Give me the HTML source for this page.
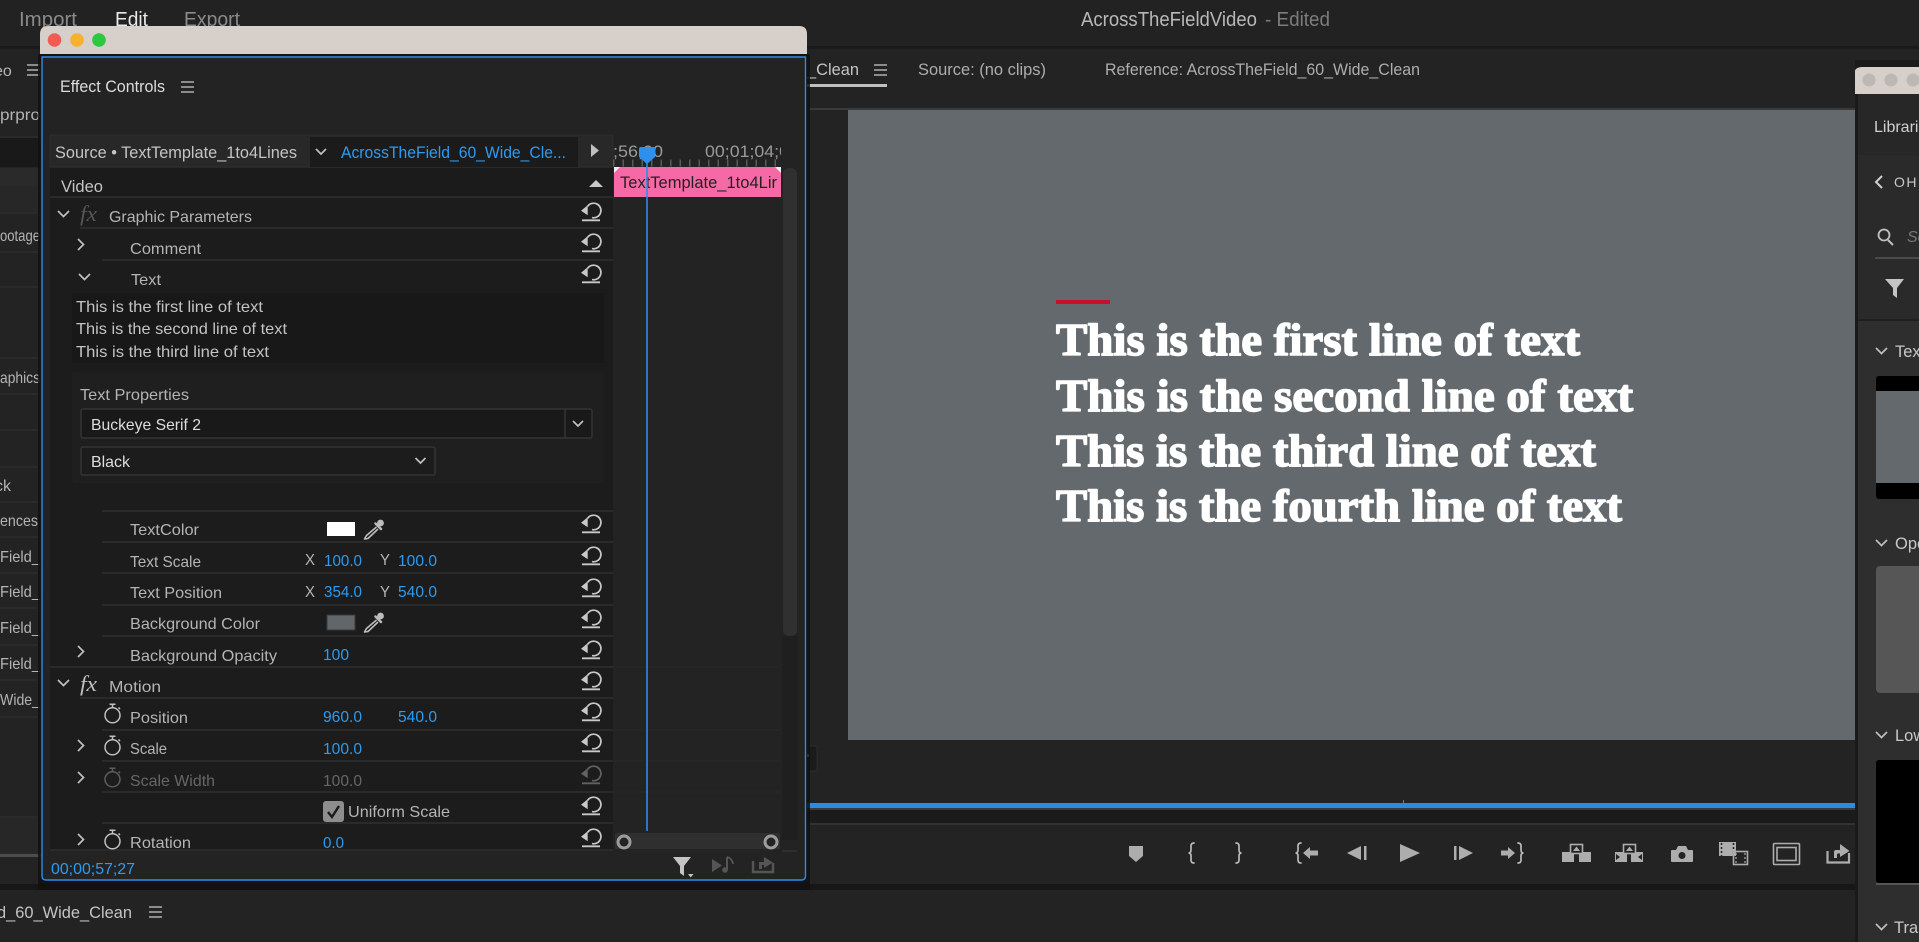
<!DOCTYPE html>
<html lang="en">
<head>
<meta charset="utf-8">
<title>AcrossTheFieldVideo - Edited</title>
<style>
html,body{margin:0;padding:0;background:#232323;width:1919px;height:942px;overflow:hidden}
svg{display:block;position:absolute;left:0;top:0}
text{font-family:"Liberation Sans",sans-serif;font-size:16px;fill:#b4b4b4}
.b{fill:#2d9bf0}
.m{font-size:20px;fill:#8a8a8a}
.t{font-size:16.5px;fill:#c4c4c4}
.d{fill:#666}
.h{font-family:"Liberation Serif",serif;font-weight:bold;font-size:45px;fill:#fff;stroke:#fff;stroke-width:1.5px;stroke-linejoin:round}
.l{stroke:#2a2a2a;stroke-width:2;fill:none}
.i{fill:#adadad}
.s{stroke:#b8b8b8;stroke-width:1.700;fill:none;stroke-linecap:round}
.p{font-size:16.5px;fill:#c8c8c8}
</style>
</head>
<body>
<svg width="1919" height="942" viewBox="0 0 1919 942" xmlns="http://www.w3.org/2000/svg">
<defs>
<g id="r" fill="none" stroke="#c8c8c8" stroke-width="1.700">
<path d="M6.500 4.500A7.300 7.300 0 1 1 11 15.600"/>
<path d="M0 8.700L6.700 3.300V13.300Z" fill="#c8c8c8" stroke="none"/>
<path d="M1 18.300H19" stroke-width="1.900"/>
</g>
<g id="w" fill="none" stroke="#c0c0c0" stroke-width="1.500">
<circle cx="8.500" cy="12.300" r="7.500"/>
<path d="M5.500 1.200H11.500M8.500 1.200V4.800M14.500 4.500L16 6"/>
</g>
<g id="e">
<circle cx="17.500" cy="4" r="3.400" fill="#bcbcbc"/>
<path d="M12.500 4.500L18 10" stroke="#bcbcbc" stroke-width="2.400" stroke-linecap="round"/>
<path d="M13.500 8L3.500 16.500L1.500 20L5 19.500L15 10" fill="none" stroke="#bcbcbc" stroke-width="1.600" stroke-linejoin="round"/>
</g>
<path id="rc" d="M0 0L5.500 5.500L0 11" fill="none" stroke="#c0c0c0" stroke-width="1.700"/>
<path id="dc" d="M0 0L5.500 5.500L11 0" fill="none" stroke="#c0c0c0" stroke-width="1.700"/>
<g id="ham" stroke="#b0b0b0" stroke-width="1.600"><path d="M0 1H13M0 6H13M0 11H13"/></g>
<clipPath id="tl"><rect x="613" y="135" width="168" height="32"/></clipPath>
<clipPath id="rp"><rect x="1855" y="0" width="64" height="942"/></clipPath>
</defs>

<!-- app background -->
<rect width="1919" height="942" fill="#232323"/>
<rect width="1919" height="46" fill="#222"/>
<rect y="46" width="1919" height="3" fill="#1a1a1a"/>
<text class="m" x="19" y="26" textLength="58" lengthAdjust="spacingAndGlyphs">Import</text>
<text class="m" x="115" y="26" textLength="33" lengthAdjust="spacingAndGlyphs" style="fill:#e8e8e8">Edit</text>
<text class="m" x="184" y="26" textLength="56" lengthAdjust="spacingAndGlyphs">Export</text>
<text class="m" x="1081" y="26" textLength="176" lengthAdjust="spacingAndGlyphs" style="fill:#b8b8b8">AcrossTheFieldVideo</text>
<text class="m" x="1265" y="26" textLength="65" lengthAdjust="spacingAndGlyphs" style="fill:#7c7c7c">- Edited</text>

<!-- left project panel -->
<rect x="0" y="49" width="42" height="836" fill="#232323"/>
<text x="-6" y="76">eo</text>
<use href="#ham" x="27" y="64"/>
<text x="0" y="120" textLength="40" lengthAdjust="spacingAndGlyphs">prpro</text>
<rect x="0" y="138" width="42" height="29" fill="#191919"/>
<rect x="0" y="168" width="42" height="17" fill="#2a2a2a"/>
<rect x="0" y="186" width="42" height="27" fill="#272727"/>
<path class="l" d="M0 137H42M0 185H42M0 213H42M0 252H42M0 287H42M0 358H42M0 394H42M0 430H42M0 467H42M0 502H42M0 537H42M0 573H42M0 608H42M0 645H42M0 680H42M0 717H42M0 817H42"/>
<text x="0" y="241" textLength="40" lengthAdjust="spacingAndGlyphs">ootage</text>
<text x="0" y="383" textLength="40" lengthAdjust="spacingAndGlyphs">aphics</text>
<text x="-5" y="491">ck</text>
<text x="0" y="526" textLength="38" lengthAdjust="spacingAndGlyphs">ences</text>
<text x="0" y="562" textLength="40" lengthAdjust="spacingAndGlyphs">Field_</text>
<text x="0" y="597" textLength="40" lengthAdjust="spacingAndGlyphs">Field_</text>
<text x="0" y="633" textLength="40" lengthAdjust="spacingAndGlyphs">Field_</text>
<text x="0" y="669" textLength="40" lengthAdjust="spacingAndGlyphs">Field_</text>
<text x="0" y="705" textLength="40" lengthAdjust="spacingAndGlyphs">Wide_</text>
<rect x="0" y="818" width="42" height="37" fill="#272727"/>
<rect x="0" y="854" width="42" height="3" fill="#4c4c4c"/>

<!-- bottom timeline panel -->
<rect y="884" width="1856" height="6" fill="#171717"/>
<rect y="890" width="1856" height="52" fill="#232323"/>
<text x="-3" y="918" textLength="135" lengthAdjust="spacingAndGlyphs" class="t">d_60_Wide_Clean</text>
<use href="#ham" x="149" y="906"/>

<!-- program monitor tabs -->
<text x="807" y="75" textLength="52" lengthAdjust="spacingAndGlyphs" class="t">_Clean</text>
<use href="#ham" x="874" y="64"/>
<rect x="807" y="84" width="80" height="3" fill="#c0c0c0"/>
<text x="918" y="75" textLength="128" lengthAdjust="spacingAndGlyphs" style="fill:#adadad;font-size:16.5px">Source: (no clips)</text>
<text x="1105" y="75" textLength="315" lengthAdjust="spacingAndGlyphs" style="fill:#adadad;font-size:16.5px">Reference: AcrossTheField_60_Wide_Clean</text>

<!-- video -->
<rect x="807" y="108" width="1048" height="2" fill="#3a3a3a"/>
<rect x="848" y="110" width="1007" height="630" fill="#63696d"/>
<rect x="1056" y="300" width="54" height="4" fill="#c8102e"/>
<text class="h" x="1056" y="355" textLength="524" lengthAdjust="spacingAndGlyphs">This is the first line of text</text>
<text class="h" x="1056" y="411" textLength="577" lengthAdjust="spacingAndGlyphs">This is the second line of text</text>
<text class="h" x="1056" y="466" textLength="540" lengthAdjust="spacingAndGlyphs">This is the third line of text</text>
<text class="h" x="1056" y="521" textLength="566" lengthAdjust="spacingAndGlyphs">This is the fourth line of text</text>

<!-- fit dropdown + scrub bar -->
<rect x="807" y="746" width="10" height="25" rx="2" fill="#1b1b1b" stroke="#2e2e2e"/>
<rect x="807" y="754" width="2" height="3" fill="#ccc"/>
<rect x="807" y="803" width="1048" height="5" fill="#2b8ae6"/>
<rect x="807" y="808" width="1048" height="2" fill="#3a3a3a"/>
<rect x="807" y="810" width="1048" height="13" fill="#1b1b1b"/>
<rect x="807" y="823" width="1048" height="2" fill="#313131"/>
<rect x="1403" y="800" width="1" height="3" fill="#777"/>

<!-- playback controls -->
<path class="i" d="M1129 846H1143V856L1136 862L1129 856Z"/>
<path class="s" d="M1194 843Q1191 843 1191 846V850Q1191 853 1188.500 853Q1191 853 1191 856V860Q1191 863 1194 863"/>
<path class="s" d="M1236 843Q1239 843 1239 846V850Q1239 853 1241.500 853Q1239 853 1239 856V860Q1239 863 1236 863"/>
<path class="s" d="M1301 843Q1298 843 1298 846V850Q1298 853 1295.500 853Q1298 853 1298 856V860Q1298 863 1301 863"/>
<path class="i" d="M1303 853L1310 847V850.500H1318V855.500H1310V859Z"/>
<path class="i" d="M1347 853L1361 846V860ZM1364 846H1366.500V860H1364Z"/>
<path class="i" d="M1400 844L1420 853L1400 862Z"/>
<path class="i" d="M1454 846H1456.500V860H1454ZM1459 846L1473 853L1459 860Z"/>
<path class="i" d="M1501 850.500H1508V847L1515 853L1508 859V855.500H1501Z"/>
<path class="s" d="M1518 843Q1521 843 1521 846V850Q1521 853 1523.500 853Q1521 853 1521 856V860Q1521 863 1518 863"/>
<path class="i" d="M1562 852H1574V862H1562ZM1579 852H1591V862H1579Z"/>
<rect x="1570.500" y="844.500" width="12" height="9" fill="#232323" stroke="#adadad" stroke-width="1.600"/>
<path class="i" d="M1576.500 846.500L1580 851H1573Z"/>
<path class="i" d="M1615 852H1627V862H1615ZM1631 852H1643V862H1631Z"/>
<path d="M1616 854L1620 857L1616 860ZM1642 854L1638 857L1642 860Z" fill="#232323"/>
<rect x="1623.500" y="844.500" width="12" height="9" fill="#232323" stroke="#adadad" stroke-width="1.600"/>
<path class="i" d="M1629.500 846.500L1633 851H1626Z"/>
<path class="i" d="M1671 851Q1671 850 1672 850H1676L1678 846H1686L1688 850H1692Q1693 850 1693 851V861Q1693 862 1692 862H1672Q1671 862 1671 861Z"/>
<circle cx="1682" cy="855.500" r="3" fill="#232323" stroke="#232323"/>
<rect x="1719" y="842" width="17" height="14" fill="#adadad"/>
<path d="M1721.500 843V856M1733.500 843V856" stroke="#232323" stroke-dasharray="2 2" stroke-width="1.500"/>
<rect x="1733.500" y="851.500" width="14" height="13" fill="none" stroke="#adadad" stroke-width="1.600"/>
<path d="M1736 853V864M1745 853V864" stroke="#adadad" stroke-dasharray="2 2" stroke-width="1.200"/>
<rect x="1773.500" y="843.500" width="26" height="21" rx="1" fill="none" stroke="#adadad" stroke-width="1.600"/>
<rect x="1777" y="847.500" width="19" height="13" fill="none" stroke="#adadad" stroke-width="1.600"/>
<path d="M1827.500 851V862.500H1849V853" fill="none" stroke="#adadad" stroke-width="2.200"/>
<path class="i" d="M1834 858V852Q1834 850 1836 850H1840V844L1849.500 851L1840 857V853.500H1838Q1837 853.500 1837 855V858Z"/>

<!-- right libraries panel -->
<g clip-path="url(#rp)">
<rect x="1855" y="60" width="64" height="882" fill="#1a1a1a"/>
<rect x="1858" y="94" width="61" height="848" fill="#2e2e2e"/>
<path d="M1854 94V75Q1854 67 1862 67H1919V94Z" fill="#d6cfca"/>
<circle cx="1869" cy="80" r="6.500" fill="#bdb8b4"/>
<circle cx="1891" cy="80" r="6.500" fill="#bdb8b4"/>
<circle cx="1913" cy="80" r="6.500" fill="#bdb8b4"/>
<rect x="1858" y="94" width="61" height="61" fill="#272727"/>
<text x="1874" y="132" style="fill:#d0d0d0">Libraries</text>
<rect x="1858" y="155" width="61" height="165" fill="#2a2a2a"/>
<path d="M1882 176L1876 182L1882 188" fill="none" stroke="#d0d0d0" stroke-width="2"/>
<text x="1894" y="187" style="font-size:14px;fill:#c8c8c8;letter-spacing:1.500px">OHIO</text>
<circle cx="1884" cy="235" r="5.500" fill="none" stroke="#c0c0c0" stroke-width="1.800"/>
<path d="M1888 240L1893 245" stroke="#c0c0c0" stroke-width="2"/>
<text x="1907" y="242" style="font-style:italic;fill:#777">Search</text>
<rect x="1875" y="257" width="44" height="2" fill="#4a4a4a"/>
<path d="M1885 279H1904L1897 288V298L1893 295V288Z" fill="#c4c4c4"/>
<rect x="1858" y="319" width="61" height="2" fill="#1f1f1f"/>
<use href="#dc" x="1876" y="348"/>
<text class="p" x="1895" y="357">Text</text>
<rect x="1876" y="376" width="60" height="123" rx="3" fill="#000"/>
<rect x="1876" y="391" width="60" height="92" fill="#63696d"/>
<use href="#dc" x="1876" y="540"/>
<text class="p" x="1895" y="549">Open</text>
<rect x="1876" y="566" width="60" height="127" rx="4" fill="#565656"/>
<use href="#dc" x="1876" y="732"/>
<text class="p" x="1895" y="741">Lower</text>
<rect x="1876" y="760" width="60" height="123" rx="3" fill="#000"/>
<rect x="1876" y="883" width="60" height="2" fill="#555"/>
<use href="#dc" x="1876" y="924"/>
<text class="p" x="1894" y="933">Trans</text>
</g>

<!-- EFFECT CONTROLS WINDOW -->
<rect x="38" y="54" width="772" height="836" fill="#111" opacity=".85"/>
<path d="M40 54V34Q40 26 48 26H799Q807 26 807 34V54Z" fill="#d6cfca"/>
<circle cx="54.500" cy="40" r="6.800" fill="#f25b54"/>
<circle cx="77" cy="40" r="6.800" fill="#f6b12e"/>
<circle cx="99" cy="40" r="6.800" fill="#2ec741"/>
<path d="M42 57H805.500V876Q805.500 880 801.500 880H46Q42 880 42 876Z" fill="#232323" stroke="#2d8ceb" stroke-width="1.400"/>

<text x="60" y="92" textLength="105" lengthAdjust="spacingAndGlyphs" style="font-size:17px;fill:#dcdcdc">Effect Controls</text>
<use href="#ham" x="181" y="81"/>

<!-- tab strip -->
<rect x="50" y="135" width="563" height="32" fill="#282828" stroke="#2e2e2e"/>
<rect x="310" y="137" width="268" height="30" fill="#1b1b1b"/>
<text x="55" y="158" textLength="242" lengthAdjust="spacingAndGlyphs" class="t">Source • TextTemplate_1to4Lines</text>
<path d="M316 149L321 154L326 149" fill="none" stroke="#c0c0c0" stroke-width="1.700"/>
<text x="341" y="158" textLength="225" lengthAdjust="spacingAndGlyphs" class="b" style="font-size:16.5px">AcrossTheField_60_Wide_Cle...</text>
<path d="M591 144L599 150.500L591 157Z" fill="#c0c0c0"/>

<!-- rows -->
<rect x="50" y="168" width="563" height="30" fill="#1b1b1b"/>
<rect x="50" y="198" width="563" height="652" fill="#1c1c1c"/>
<rect x="72" y="293" width="532" height="70" fill="#181818"/>
<rect x="72" y="372" width="532" height="111" rx="3" fill="#1f1f1f"/>

<path class="l" d="M50 197H613M80 228H613M102 260H613M102 511H613M102 542H613M102 573H613M102 605H613M102 636H613M50 667H613M80 698H613M102 730H613M102 761H613M102 792H613M102 823H613M50 850H613"/>

<text x="61" y="192" textLength="42" lengthAdjust="spacingAndGlyphs" class="t">Video</text>
<path d="M589 187L596 180L603 187Z" fill="#c8c8c8"/>

<use href="#dc" x="58" y="211"/>
<text x="80" y="221" textLength="17" lengthAdjust="spacingAndGlyphs" style="font-family:'Liberation Serif',serif;font-style:italic;font-size:22px;fill:#555">fx</text>
<text x="109" y="222" textLength="143" lengthAdjust="spacingAndGlyphs">Graphic Parameters</text>
<use href="#r" x="581" y="202"/>

<use href="#rc" x="78" y="239"/>
<text x="130" y="254" textLength="71" lengthAdjust="spacingAndGlyphs">Comment</text>
<use href="#r" x="581" y="233"/>

<use href="#dc" x="79" y="274"/>
<text x="131" y="285" textLength="30" lengthAdjust="spacingAndGlyphs">Text</text>
<use href="#r" x="581" y="264"/>

<text x="76" y="312" textLength="187" lengthAdjust="spacingAndGlyphs" style="fill:#c4c4c4">This is the first line of text</text>
<text x="76" y="334" textLength="211" lengthAdjust="spacingAndGlyphs" style="fill:#c4c4c4">This is the second line of text</text>
<text x="76" y="357" textLength="193" lengthAdjust="spacingAndGlyphs" style="fill:#c4c4c4">This is the third line of text</text>

<text x="80" y="400" textLength="109" lengthAdjust="spacingAndGlyphs">Text Properties</text>
<rect x="81" y="409" width="511" height="29" rx="2" fill="#191919" stroke="#343434" stroke-width="1.500"/>
<path d="M565 409V438" stroke="#343434" stroke-width="1.500"/>
<text x="91" y="430" textLength="110" lengthAdjust="spacingAndGlyphs" style="fill:#dedede">Buckeye Serif 2</text>
<path d="M573 421L578 426L583 421" fill="none" stroke="#c0c0c0" stroke-width="1.700"/>
<rect x="81" y="447" width="354" height="28" rx="2" fill="#1c1c1c" stroke="#343434" stroke-width="1.500"/>
<text x="91" y="467" textLength="39" lengthAdjust="spacingAndGlyphs" style="fill:#dedede">Black</text>
<path d="M415.500 458L420.500 463L425.500 458" fill="none" stroke="#c0c0c0" stroke-width="1.700"/>

<text x="130" y="535" textLength="69" lengthAdjust="spacingAndGlyphs">TextColor</text>
<rect x="327" y="522" width="28" height="14" fill="#fff"/>
<use href="#e" x="363" y="519"/>
<use href="#r" x="581" y="514"/>

<text x="130" y="567" textLength="71" lengthAdjust="spacingAndGlyphs">Text Scale</text>
<text x="305" y="565" textLength="10" lengthAdjust="spacingAndGlyphs">X</text>
<text x="324" y="566" textLength="38" lengthAdjust="spacingAndGlyphs" class="b">100.0</text>
<text x="380" y="565" textLength="10" lengthAdjust="spacingAndGlyphs">Y</text>
<text x="398" y="566" textLength="39" lengthAdjust="spacingAndGlyphs" class="b">100.0</text>
<use href="#r" x="581" y="546"/>

<text x="130" y="598" textLength="92" lengthAdjust="spacingAndGlyphs">Text Position</text>
<text x="305" y="597" textLength="10" lengthAdjust="spacingAndGlyphs">X</text>
<text x="324" y="597" textLength="38" lengthAdjust="spacingAndGlyphs" class="b">354.0</text>
<text x="380" y="597" textLength="10" lengthAdjust="spacingAndGlyphs">Y</text>
<text x="398" y="597" textLength="39" lengthAdjust="spacingAndGlyphs" class="b">540.0</text>
<use href="#r" x="581" y="578"/>

<text x="130" y="629" textLength="130" lengthAdjust="spacingAndGlyphs">Background Color</text>
<rect x="327" y="615" width="28" height="15" fill="#60666a" stroke="#3a3a3a"/>
<use href="#e" x="363" y="612"/>
<use href="#r" x="581" y="609"/>

<use href="#rc" x="78" y="646"/>
<text x="130" y="661" textLength="147" lengthAdjust="spacingAndGlyphs">Background Opacity</text>
<text x="323" y="660" textLength="26" lengthAdjust="spacingAndGlyphs" class="b">100</text>
<use href="#r" x="581" y="640"/>

<use href="#dc" x="58" y="680"/>
<text x="80" y="691" textLength="17" lengthAdjust="spacingAndGlyphs" style="font-family:'Liberation Serif',serif;font-style:italic;font-size:22px;fill:#c0c0c0">fx</text>
<text x="109" y="692" textLength="52" lengthAdjust="spacingAndGlyphs">Motion</text>
<use href="#r" x="581" y="671"/>

<use href="#w" x="104" y="703"/>
<text x="130" y="723" textLength="58" lengthAdjust="spacingAndGlyphs">Position</text>
<text x="323" y="722" textLength="39" lengthAdjust="spacingAndGlyphs" class="b">960.0</text>
<text x="398" y="722" textLength="39" lengthAdjust="spacingAndGlyphs" class="b">540.0</text>
<use href="#r" x="581" y="702"/>

<use href="#rc" x="78" y="740"/>
<use href="#w" x="104" y="735"/>
<text x="130" y="754" textLength="37" lengthAdjust="spacingAndGlyphs">Scale</text>
<text x="323" y="754" textLength="39" lengthAdjust="spacingAndGlyphs" class="b">100.0</text>
<use href="#r" x="581" y="733"/>

<use href="#rc" x="78" y="772"/>
<use href="#w" x="104" y="767" opacity=".4"/>
<text x="130" y="786" textLength="85" lengthAdjust="spacingAndGlyphs" class="d">Scale Width</text>
<text x="323" y="786" textLength="39" lengthAdjust="spacingAndGlyphs" class="d">100.0</text>
<use href="#r" x="581" y="765" opacity=".4"/>

<rect x="323" y="801" width="21" height="21" rx="3" fill="#8e8e8e"/>
<path d="M328 812L332 817L339 806" fill="none" stroke="#1a1a1a" stroke-width="2.400"/>
<text x="348" y="817" textLength="102" lengthAdjust="spacingAndGlyphs">Uniform Scale</text>
<use href="#r" x="581" y="796"/>

<use href="#rc" x="78" y="834"/>
<use href="#w" x="104" y="829"/>
<text x="130" y="848" textLength="61" lengthAdjust="spacingAndGlyphs">Rotation</text>
<text x="323" y="848" textLength="21" lengthAdjust="spacingAndGlyphs" class="b">0.0</text>
<use href="#r" x="581" y="828"/>

<!-- mini timeline -->
<rect x="783" y="168" width="14" height="468" rx="6" fill="#303030"/>
<rect x="782" y="636" width="16" height="204" fill="#1f1f1f"/>
<path d="M614 667H781M614 730H781M614 761H781M614 792H781" stroke="#272727" stroke-width="1.500"/>
<g clip-path="url(#tl)">
<text x="613" y="157" textLength="50" lengthAdjust="spacingAndGlyphs" style="fill:#9a9a9a;font-size:16.500px">;56;00</text>
<text x="705" y="157" textLength="84" lengthAdjust="spacingAndGlyphs" style="fill:#9a9a9a;font-size:16.500px">00;01;04;0</text>
<line x1="613" y1="163" x2="781" y2="163" stroke="#5a5a5a" stroke-width="7" stroke-dasharray="1.500 8"/>
</g>
<rect x="614" y="167" width="167" height="30" fill="#f56aa6"/>
<path d="M614 167H620L614 173ZM781 167H775L781 173Z" fill="#eee"/>
<text x="620" y="188" textLength="157" lengthAdjust="spacingAndGlyphs" style="fill:#231f20;font-size:16.500px">TextTemplate_1to4Lir</text>
<path d="M647 160V831" stroke="#2d8ceb" stroke-width="1.600"/>
<path d="M641 147H653Q655 147 655 149V157L647 164L639 157V149Q639 147 641 147Z" fill="#2b90ee"/>

<rect x="615" y="833" width="165" height="16" fill="#2f2f2f"/>
<circle cx="624" cy="842" r="6" fill="#232323" stroke="#9c9c9c" stroke-width="3"/>
<circle cx="771" cy="842" r="6" fill="#232323" stroke="#9c9c9c" stroke-width="3"/>
<path d="M782 851H797" stroke="#333" stroke-width="1.500"/>

<!-- footer -->
<text x="51" y="874" textLength="84" lengthAdjust="spacingAndGlyphs" class="b">00;00;57;27</text>
<path d="M673 857H691L684 866V876L680 873V866Z" fill="#c4c4c4"/>
<path d="M688 874H693.500L690.700 877.500Z" fill="#c4c4c4"/>
<path d="M712 859V872L722 865.500Z" fill="#555"/>
<path d="M727 857V870" stroke="#555" stroke-width="2"/>
<path d="M727 857Q732 858 733 864" fill="none" stroke="#555" stroke-width="1.800"/>
<circle cx="725" cy="870" r="2.800" fill="#555"/>
<path d="M753 861V872H773V863" fill="none" stroke="#555" stroke-width="2.400"/>
<path d="M759 869V862H764V857L773 862.500L764 868V865H762V869Z" fill="#555"/>
</svg>
</body>
</html>
